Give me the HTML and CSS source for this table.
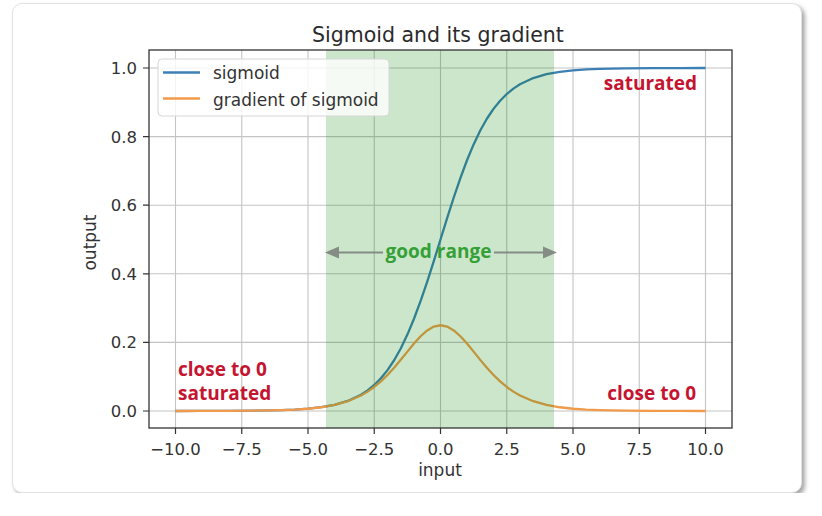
FILE: index.html
```html
<!DOCTYPE html>
<html lang="en">
<head>
<meta charset="utf-8">
<title>Sigmoid and its gradient</title>
<link rel="stylesheet" href="styles.css">
</head>
<body>
<div class="card">
  <svg class="chart" width="788" height="488" viewBox="13 4 788 488" xmlns="http://www.w3.org/2000/svg">
    <text class="title" x="438" y="41.5">Sigmoid and its gradient</text>

    <g class="grid">
      <line x1="175.5" y1="50" x2="175.5" y2="428"/>
      <line x1="241.75" y1="50" x2="241.75" y2="428"/>
      <line x1="308" y1="50" x2="308" y2="428"/>
      <line x1="374.25" y1="50" x2="374.25" y2="428"/>
      <line x1="440.5" y1="50" x2="440.5" y2="428"/>
      <line x1="506.75" y1="50" x2="506.75" y2="428"/>
      <line x1="573" y1="50" x2="573" y2="428"/>
      <line x1="639.25" y1="50" x2="639.25" y2="428"/>
      <line x1="705.5" y1="50" x2="705.5" y2="428"/>
      <line x1="149" y1="411" x2="732" y2="411"/>
      <line x1="149" y1="342.4" x2="732" y2="342.4"/>
      <line x1="149" y1="273.8" x2="732" y2="273.8"/>
      <line x1="149" y1="205.2" x2="732" y2="205.2"/>
      <line x1="149" y1="136.6" x2="732" y2="136.6"/>
      <line x1="149" y1="68" x2="732" y2="68"/>
    </g>

    <polyline class="sig" points="175.5,410.98 202,410.96 228.5,410.88 255,410.69 281.5,410.14 294.75,409.59 308,408.7 321.25,407.23 334.5,404.83 347.75,400.95 361,394.74 367.63,390.39 374.25,384.97 380.88,378.31 387.5,370.11 394.13,360.24 400.75,348.44 407.38,334.61 414,318.77 420.63,300.97 427.25,281.52 433.88,260.83 440.5,239.5 447.13,218.17 453.75,197.48 460.38,178.03 467,160.23 473.63,144.39 480.25,130.56 486.88,118.76 493.5,108.89 500.13,100.69 506.75,94.03 513.38,88.61 520,84.26 533.25,78.05 546.5,74.17 559.75,71.77 573,70.3 586.25,69.41 599.5,68.86 626,68.31 652.5,68.12 679,68.04 705.5,68.02"/>
    <polyline class="grad" points="175.5,410.98 202,410.97 228.5,410.9 255,410.69 281.5,410.14 294.75,409.59 308,408.74 321.25,407.26 334.5,404.93 347.75,401.22 361,395.5 367.63,391.62 374.25,386.96 380.88,381.43 387.5,374.98 394.13,367.75 400.75,359.86 407.38,351.63 414,343.57 420.63,336.26 427.25,330.39 433.88,326.58 440.5,325.25 447.13,326.58 453.75,330.39 460.38,336.26 467,343.57 473.63,351.63 480.25,359.86 486.88,367.75 493.5,374.98 500.13,381.43 506.75,386.96 513.38,391.62 520,395.5 533.25,401.22 546.5,404.93 559.75,407.26 573,408.74 586.25,409.59 599.5,410.14 626,410.69 652.5,410.9 679,410.97 705.5,410.98"/>

    <rect class="span" x="326" y="50" width="228" height="378"/>

    <g class="arrow">
      <line x1="338" y1="252.5" x2="383" y2="252.5"/>
      <polygon points="325,252.5 339,246.5 339,258.5"/>
      <line x1="494" y1="252.5" x2="544" y2="252.5"/>
      <polygon points="557,252.5 543,246.5 543,258.5"/>
    </g>
    <text class="note good" x="438.5" y="257.5">good range</text>
    <text class="note bad end" x="697" y="90">saturated</text>
    <text class="note bad end" x="696" y="400">close to 0</text>
    <text class="note bad" x="178" y="376">close to 0</text>
    <text class="note bad" x="178" y="400">saturated</text>

    <rect class="frame" x="149" y="50" width="583" height="378"/>

    <g class="ticks">
      <line x1="175.5" y1="428" x2="175.5" y2="434"/>
      <line x1="241.75" y1="428" x2="241.75" y2="434"/>
      <line x1="308" y1="428" x2="308" y2="434"/>
      <line x1="374.25" y1="428" x2="374.25" y2="434"/>
      <line x1="440.5" y1="428" x2="440.5" y2="434"/>
      <line x1="506.75" y1="428" x2="506.75" y2="434"/>
      <line x1="573" y1="428" x2="573" y2="434"/>
      <line x1="639.25" y1="428" x2="639.25" y2="434"/>
      <line x1="705.5" y1="428" x2="705.5" y2="434"/>
      <line x1="143" y1="411" x2="149" y2="411"/>
      <line x1="143" y1="342.4" x2="149" y2="342.4"/>
      <line x1="143" y1="273.8" x2="149" y2="273.8"/>
      <line x1="143" y1="205.2" x2="149" y2="205.2"/>
      <line x1="143" y1="136.6" x2="149" y2="136.6"/>
      <line x1="143" y1="68" x2="149" y2="68"/>
    </g>

    <g class="xlabels">
      <text x="175.5" y="455">−10.0</text>
      <text x="241.75" y="455">−7.5</text>
      <text x="308" y="455">−5.0</text>
      <text x="374.25" y="455">−2.5</text>
      <text x="440.5" y="455">0.0</text>
      <text x="506.75" y="455">2.5</text>
      <text x="573" y="455">5.0</text>
      <text x="639.25" y="455">7.5</text>
      <text x="705.5" y="455">10.0</text>
    </g>
    <g class="ylabels">
      <text x="137" y="417">0.0</text>
      <text x="137" y="348.4">0.2</text>
      <text x="137" y="279.8">0.4</text>
      <text x="137" y="211.2">0.6</text>
      <text x="137" y="142.6">0.8</text>
      <text x="137" y="74">1.0</text>
    </g>
    <text class="axlabel" x="440" y="476">input</text>
    <text class="axlabel" transform="translate(96 242.5) rotate(-90)" x="0" y="0">output</text>

    <g class="legend">
      <rect class="legend-box" x="158" y="59" width="231" height="57" rx="4"/>
      <line class="sig" x1="163" y1="72.5" x2="200" y2="72.5"/>
      <line class="grad" x1="163" y1="98.5" x2="200" y2="98.5"/>
      <text class="legend-text" x="213" y="79">sigmoid</text>
      <text class="legend-text" x="213" y="105.5">gradient of sigmoid</text>
    </g>
  </svg>
</div>
</body>
</html>
```

FILE: styles.css
```css
html, body {
  margin: 0;
  padding: 0;
  background: #ffffff;
}

body {
  padding: 3px 0 0 12px;
  font-family: "DejaVu Sans", sans-serif;
}

.card {
  width: 788px;
  height: 488px;
  border: 1px solid #e2e2e2;
  border-radius: 10px;
  background: #ffffff;
  box-shadow: 3px 3px 4px rgba(0, 0, 0, 0.35);
  overflow: hidden;
}

.chart {
  display: block;
}

.title {
  font-family: "DejaVu Sans", sans-serif;
  font-size: 20.5px;
  fill: #2a2a2a;
  text-anchor: middle;
}

.grid line {
  stroke: #c4c4c4;
  stroke-width: 1.1;
}

.sig {
  fill: none;
  stroke: #3d80b6;
  stroke-width: 2.3;
  stroke-linejoin: round;
  stroke-linecap: butt;
}

.grad {
  fill: none;
  stroke: #f09a4a;
  stroke-width: 2.3;
  stroke-linejoin: round;
  stroke-linecap: butt;
}

.span {
  fill: #008000;
  fill-opacity: 0.2;
}

.arrow line {
  stroke: #858c85;
  stroke-width: 2;
}

.arrow polygon {
  fill: #858c85;
}

.note {
  font-family: "Open Sans", "Noto Sans", sans-serif;
  font-weight: 700;
  font-size: 19px;
}

.note.end {
  text-anchor: end;
}

.good {
  fill: #35a035;
  text-anchor: middle;
}

.bad {
  fill: #c4142f;
}

.frame {
  fill: none;
  stroke: #333333;
  stroke-width: 1.3;
}

.ticks line {
  stroke: #333333;
  stroke-width: 1.2;
}

.xlabels text {
  font-size: 16.5px;
  fill: #333333;
  text-anchor: middle;
}

.ylabels text {
  font-size: 16.5px;
  fill: #333333;
  text-anchor: end;
}

.axlabel {
  font-size: 17px;
  fill: #333333;
  text-anchor: middle;
}

.legend-box {
  fill: #ffffff;
  fill-opacity: 0.8;
  stroke: #d6d6d6;
  stroke-width: 1;
}

.legend-text {
  font-size: 17px;
  fill: #333333;
}
```
